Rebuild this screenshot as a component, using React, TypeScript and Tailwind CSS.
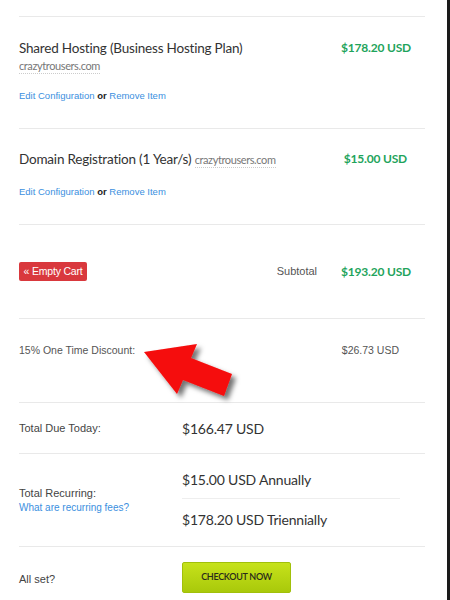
import React from "react";

const head = { fontFamily: "Lato, 'Noto Sans', sans-serif" };
const body = { fontFamily: "'Liberation Sans', Arial, sans-serif" };

function Links() {
  return (
    <p className="text-[9.5px] leading-[14px] text-[#3b8fe0]" style={body}>
      <span>Edit Configuration</span> <b className="text-[#222]">or</b> <span>Remove Item</span>
    </p>
  );
}

function Domain() {
  return (
    <span
      className="border-b border-dotted border-[#ccc] pb-[1px] text-[11px] tracking-[-0.4px] text-[#777]"
      style={head}
    >
      crazytrousers.com
    </span>
  );
}

function Arrow() {
  return (
    <svg className="pointer-events-none absolute left-[130px] top-[330px]" width="120" height="85" viewBox="130 330 120 85">
      <defs>
        <filter id="sh" x="-20%" y="-20%" width="150%" height="150%">
          <feDropShadow dx="4" dy="4" stdDeviation="2.5" floodColor="#000" floodOpacity="0.55" />
        </filter>
      </defs>
      <polygon
        points="144,352 197,344 191,358 232,374 224,396 183,380 177,394"
        fill="#f50a0a"
        filter="url(#sh)"
      />
    </svg>
  );
}

export default function App() {
  return (
    <div className="relative h-[600px] w-[450px] overflow-hidden border-r-[3px] border-[#1a1a1a] bg-white">
      <div className="w-[425px] pl-[19px] pt-[16px]">
        <div className="h-[1px] bg-[#e9e9e9]" />

        <div className="flex h-[111px] items-start justify-between pr-[14px] pt-[22px]">
          <div>
            <p className="text-[13.5px] leading-[18px] tracking-[-0.2px] text-[#333]" style={head}>
              Shared Hosting (Business Hosting Plan)
            </p>
            <div className="leading-[14px]">
              <Domain />
            </div>
            <div className="mt-[16px]">
              <Links />
            </div>
          </div>
          <p className="text-[12px] font-bold leading-[18px] tracking-[-0.2px] text-[#1fa45c]" style={head}>
            $178.20 USD
          </p>
        </div>

        <div className="h-[1px] bg-[#e9e9e9]" />

        <div className="flex h-[95px] items-start justify-between pr-[18px] pt-[21px]">
          <div>
            <p className="text-[13.5px] leading-[18px] tracking-[-0.2px] text-[#333]" style={head}>
              Domain Registration (1 Year/s) <Domain />
            </p>
            <div className="mt-[16px]">
              <Links />
            </div>
          </div>
          <p className="text-[12px] font-bold leading-[18px] tracking-[-0.2px] text-[#1fa45c]" style={head}>
            $15.00 USD
          </p>
        </div>

        <div className="h-[1px] bg-[#e9e9e9]" />

        <div className="flex h-[93px] items-center justify-between pr-[14px]">
          <button
            className="h-[19px] w-[68px] rounded-[2px] bg-[#d9383d] text-[10.5px] leading-[19px] tracking-[-0.2px] text-white"
            style={body}
          >
            « Empty Cart
          </button>
          <div className="flex items-center gap-[24px]">
            <span className="text-[11px] text-[#555]" style={body}>
              Subtotal
            </span>
            <span className="text-[12px] font-bold tracking-[-0.2px] text-[#1fa45c]" style={head}>
              $193.20 USD
            </span>
          </div>
        </div>

        <div className="h-[1px] bg-[#e9e9e9]" />

        <div
          className="flex h-[83px] items-start justify-between pr-[26px] pt-[24px] text-[10.5px] leading-[14px] text-[#555]"
          style={body}
        >
          <span>15% One Time Discount:</span>
          <span>$26.73 USD</span>
        </div>

        <div className="h-[1px] bg-[#e9e9e9]" />

        <div className="flex h-[50px] items-center">
          <span className="w-[163px] text-[11px] text-[#444]" style={body}>
            Total Due Today:
          </span>
          <span className="text-[14px] tracking-[-0.2px] text-[#333]" style={head}>
            $166.47 USD
          </span>
        </div>

        <div className="h-[1px] bg-[#e9e9e9]" />

        <div className="flex h-[92px] items-center">
          <div className="w-[163px]" style={body}>
            <p className="text-[11px] leading-[16px] text-[#444]">Total Recurring:</p>
            <p className="text-[10px] leading-[14px] text-[#3b8fe0]">What are recurring fees?</p>
          </div>
          <div className="w-[218px]">
            <p className="pb-[7px] text-[14px] leading-[22px] tracking-[-0.2px] text-[#333]" style={head}>
              $15.00 USD Annually
            </p>
            <div className="h-[1px] bg-[#eee]" />
            <p className="pt-[10px] text-[14px] leading-[22px] tracking-[-0.2px] text-[#333]" style={head}>
              $178.20 USD Triennially
            </p>
          </div>
        </div>

        <div className="h-[1px] bg-[#e9e9e9]" />

        <div className="flex h-[60px] items-center">
          <span className="w-[163px] pt-[4px] text-[11px] text-[#444]" style={body}>
            All set?
          </span>
          <button
            className="h-[31px] w-[109px] rounded-[2px] border border-[#a1c00a] bg-gradient-to-b from-[#c6e21a] to-[#a9c90a] text-[9px] font-semibold uppercase tracking-[-0.3px] text-[#2a2a1a]"
            style={head}
          >
            Checkout Now
          </button>
        </div>
      </div>
      <Arrow />
    </div>
  );
}
